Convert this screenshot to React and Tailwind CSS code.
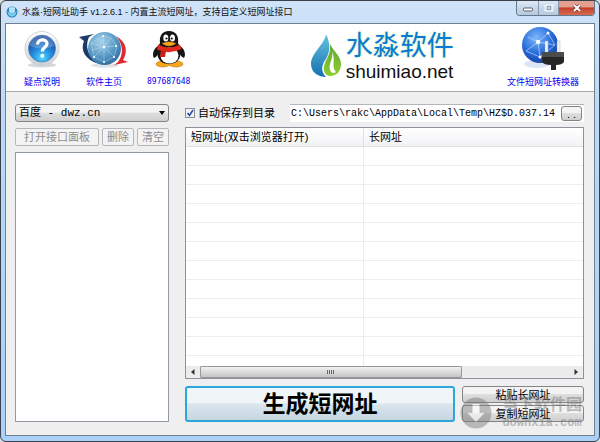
import React, { useState } from "react";

const rows = Array.from({ length: 12 });

const silver =
  "rounded-[3px] border border-[#858585] bg-linear-to-b from-[#f3f3f3] from-45% via-[#dedede] via-50% to-[#cfcfcf]";

function AppIcon() {
  return (
    <svg viewBox="0 0 12 12" className="size-3">
      <circle cx="6" cy="6" r="5.5" fill="#2a7fb5" />
      <path d="M1.500 5q4.500 5 9 0c0 7.500-9 7.500-9 0z" fill="#79cdf0" />
      <path d="M3 1.800q3-1.800 6 0v4q-3 3-6 0z" fill="#b6e2f5" />
    </svg>
  );
}

function HelpIcon() {
  return (
    <svg viewBox="0 0 38 38" className="size-[38px]">
      <defs>
        <radialGradient id="help" cx="50%" cy="85%" r="75%">
          <stop offset="0" stopColor="#52d8ff" />
          <stop offset="0.5" stopColor="#2588da" />
          <stop offset="1" stopColor="#164a9c" />
        </radialGradient>
        <linearGradient id="ring" x1="0" y1="0" x2="0" y2="1">
          <stop offset="0" stopColor="#ffffff" />
          <stop offset="1" stopColor="#c9ced4" />
        </linearGradient>
      </defs>
      <ellipse cx="19" cy="35" rx="14" ry="2.500" fill="#d5d8dc" />
      <circle cx="19" cy="18.500" r="17" fill="url(#ring)" stroke="#d0d3d6" />
      <circle cx="19" cy="18.500" r="13.500" fill="url(#help)" stroke="#3d6fb0" strokeWidth=".6" />
      <path d="M7 16a12 12 0 0 1 24 0q-12 5-24 0z" fill="#fff" opacity=".22" />
      <path
        d="M14.500 14.500c0-6 9.500-6 9.500-.8 0 3.600-4.700 3.600-4.700 7.800"
        fill="none"
        stroke="#fff"
        strokeWidth="3.200"
      />
      <circle cx="19.300" cy="25.800" r="2" fill="#fff" />
    </svg>
  );
}

function GlobeIcon() {
  return (
    <svg viewBox="0 0 50 38" className="h-[38px] w-[50px]">
      <defs>
        <radialGradient id="globe" cx="40%" cy="30%" r="75%">
          <stop offset="0" stopColor="#a9d2ea" />
          <stop offset="0.6" stopColor="#5699c6" />
          <stop offset="1" stopColor="#2d6a9c" />
        </radialGradient>
      </defs>
      <ellipse cx="26" cy="35.500" rx="14" ry="2" fill="#dfe2e6" />
      <path d="M0 7l15-3-5 3C6 15 8 27 20 34 6 30 1 20 5 11z" fill="#1d3b68" />
      <path d="M49 32l-14 3 4-3c6-8 5-18-2-26 11 6 12 16 7 24z" fill="#dc2b31" />
      <circle cx="25.500" cy="18.500" r="16.500" fill="url(#globe)" />
      <path
        d="M12 13l12-7 8 2 6 8-3 11-10 5-10-5-3-14 13 4 13-1M24 6l1 11-10 10M25 17l10 10M25 17l7-9M13 20l12-3v15"
        fill="none"
        stroke="#d8edf8"
        strokeWidth=".6"
        opacity=".6"
      />
      <g fill="#fff">
        <circle cx="24" cy="6" r="1" />
        <circle cx="25" cy="17" r="1.200" />
        <circle cx="15" cy="27" r="1" />
        <circle cx="35" cy="27" r="1" />
        <circle cx="25" cy="32" r="1" />
        <circle cx="37" cy="16" r="1" />
      </g>
    </svg>
  );
}

function PenguinIcon() {
  return (
    <svg viewBox="0 0 34 38" className="h-[38px] w-[34px]">
      <ellipse cx="11" cy="34" rx="7" ry="3" fill="#f6a71c" stroke="#c06c10" strokeWidth=".6" />
      <ellipse cx="24" cy="34" rx="7" ry="3" fill="#f6a71c" stroke="#c06c10" strokeWidth=".6" />
      <path d="M6 16C1 19 0 25 2 28c2-1 3-2 4-4zM28 16c5 3 6 9 4 12-2-1-3-2-4-4z" fill="#151515" />
      <path d="M17 1C10 1 7 6 8 13c-6 10-2 21 9 21s15-11 9-21C27 6 24 1 17 1z" fill="#151515" />
      <ellipse cx="17.500" cy="25.500" rx="9" ry="8" fill="#fff" />
      <ellipse cx="13.800" cy="8" rx="2.500" ry="3.500" fill="#fff" />
      <ellipse cx="20.500" cy="8" rx="2.500" ry="3.500" fill="#fff" />
      <circle cx="14.500" cy="8.500" r="1.100" fill="#111" />
      <circle cx="19.800" cy="8.500" r="1.100" fill="#111" />
      <path d="M10 13.500q7-3.500 14 0-7 5-14 0z" fill="#f7a917" stroke="#b96a0c" strokeWidth=".4" />
      <path d="M6 14.500q11 6 22 0l1.500 4.500Q17 25 5 19.500z" fill="#df2a20" />
      <path d="M9 20l5 1-1 6H8z" fill="#cf2018" />
    </svg>
  );
}

function PlugIcon() {
  return (
    <svg viewBox="0 0 44 46" className="h-[46px] w-11">
      <defs>
        <radialGradient id="net" cx="40%" cy="30%" r="75%">
          <stop offset="0" stopColor="#7cb8fa" />
          <stop offset="0.55" stopColor="#2b70dc" />
          <stop offset="1" stopColor="#123da0" />
        </radialGradient>
      </defs>
      <ellipse cx="16" cy="38" rx="13" ry="4" fill="#dce5f6" />
      <circle cx="19" cy="19" r="18" fill="url(#net)" />
      <path
        d="M7 11l10 5 10-9M17 16l2 15 15-12-17-3M17 16L5 25M19 31L5 25M27 7l7 12"
        fill="none"
        stroke="#cfe4ff"
        strokeWidth="1"
        opacity=".6"
      />
      <circle cx="17" cy="16" r="2.200" fill="#fff" />
      <circle cx="27" cy="7" r="1.500" fill="#fff" />
      <circle cx="19" cy="31" r="1.500" fill="#fff" />
      <path d="M24 15h3v12h-3zM36 15h3v12h-3z" fill="#eef2f7" stroke="#9aa6b8" strokeWidth=".4" />
      <path d="M21 26h22v10q-2 3-8 3v5h-5v-5q-7 0-9-3z" fill="#262626" />
      <path d="M21 26h22v5H21z" fill="#4c4c4c" />
    </svg>
  );
}

function DropLogo() {
  return (
    <svg viewBox="0 0 32 46" className="h-[46px] w-8">
      <defs>
        <linearGradient id="drop" x1="0" y1="0" x2="0" y2="1">
          <stop offset="0" stopColor="#67c3dc" />
          <stop offset="1" stopColor="#146fb5" />
        </linearGradient>
        <linearGradient id="leaf" x1="0" y1="0" x2="0" y2="1">
          <stop offset="0" stopColor="#5fa633" />
          <stop offset="1" stopColor="#8fce2f" />
        </linearGradient>
      </defs>
      <path d="M16 1C15 11 1 20 1 31c0 8 7 13 15 13C10 38 12 31 16 26c4-7 5-15 0-25z" fill="url(#drop)" />
      <path
        d="M20 11c1 9-3 14-5 19-3 7 0 13 5 13 7 0 11-5 11-12 0-8-7-12-11-20z"
        fill="url(#leaf)"
      />
      <path d="M22 18c2 8-4 12-2 19 1 3 4 4 6 2-5-5 0-11-4-21z" fill="#fff" />
    </svg>
  );
}

function HeaderLink({ label, children }) {
  return (
    <a href="#" className="flex flex-col items-center justify-between text-[9px] leading-3 text-[#0000f0]">
      {children}
      <span>{label}</span>
    </a>
  );
}

function TitleBar() {
  return (
    <header className="flex h-[22px] shrink-0 items-start justify-between pl-px">
      <div className="flex items-center gap-1 pt-[3px]">
        <AppIcon />
        <h1 className="text-[9px] leading-4 text-[#111]">
          水淼·短网址助手 v1.2.6.1 - 内置主流短网址，支持自定义短网址接口
        </h1>
      </div>
      <div className="flex h-[15px] overflow-hidden rounded-b-[4px] border border-t-0 border-[#68788a]">
        <button
          aria-label="最小化"
          className="flex w-[22px] items-center justify-center border-r border-[#8796a8] bg-linear-to-b from-[#dbe8f6] to-[#b5c8dd]"
        >
          <svg viewBox="0 0 10 8" className="h-2 w-2.5">
            <rect x=".5" y="4" width="9" height="3" rx="1" fill="#fff" stroke="#566375" />
          </svg>
        </button>
        <button
          aria-label="最大化"
          disabled
          className="flex w-5 items-center justify-center border-r border-[#8796a8] bg-linear-to-b from-[#dbe8f6] to-[#b5c8dd]"
        >
          <svg viewBox="0 0 10 8" className="h-2 w-2.5">
            <rect x="1" y="1" width="8" height="6" fill="#d3dfec" stroke="#f4f8fc" />
            <rect x="3.500" y="2.500" width="3" height="3" fill="none" stroke="#93a3b5" />
          </svg>
        </button>
        <button
          aria-label="关闭"
          className="flex w-[35px] items-center justify-center bg-linear-to-b from-[#e3a091] from-40% via-[#c5402c] via-50% to-[#d36b50]"
        >
          <svg viewBox="0 0 10 8" className="h-2 w-2.5">
            <path d="M2 1l6 6M8 1L2 7" stroke="#6b3535" strokeWidth="3.200" />
            <path d="M2 1l6 6M8 1L2 7" stroke="#fff" strokeWidth="2" />
          </svg>
        </button>
      </div>
    </header>
  );
}

function Banner() {
  return (
    <div className="flex h-[68px] shrink-0 items-stretch justify-between border-b border-[#a9a9a9] bg-white pr-[15px] pb-[3px] pl-[17px]">
      <nav className="flex gap-[18px] pt-1.5">
        <HeaderLink label="疑点说明">
          <HelpIcon />
        </HeaderLink>
        <HeaderLink label="软件主页">
          <GlobeIcon />
        </HeaderLink>
        <a
          href="#"
          className="flex flex-col items-center justify-between font-['DejaVu_Sans_Mono',monospace] text-[8px] leading-3 text-[#0000f0]"
        >
          <PenguinIcon />
          <span>897687648</span>
        </a>
      </nav>
      <div className="flex items-center gap-1 pl-[66px]">
        <DropLogo />
        <div>
          <div className="text-[27px] leading-8 text-[#0a7ad6] [text-shadow:0_0_2px_#b4e68c]">水淼软件</div>
          <div className="text-[19px] leading-5 text-[#111]">shuimiao.net</div>
        </div>
      </div>
      <div className="flex pt-0.5">
        <HeaderLink label="文件短网址转换器">
          <PlugIcon />
        </HeaderLink>
      </div>
    </div>
  );
}

function ApiPanel() {
  const smallButton =
    "rounded-[2px] border border-[#b5b8bb] bg-[#f3f3f3] px-1 text-[11px] leading-4 text-[#8c8c8c]";
  return (
    <aside className="flex w-[154px] shrink-0 flex-col">
      <div className="relative flex">
        <select
          aria-label="接口"
          className={`h-[18px] w-full appearance-none pl-[3px] font-['Liberation_Mono','Noto_Sans_CJK_SC',monospace] text-[11px] leading-4 text-black ${silver}`}
        >
          <option>百度 - dwz.cn</option>
        </select>
        <svg viewBox="0 0 6 4" className="pointer-events-none absolute top-[7px] right-1 h-1 w-1.5">
          <path d="M0 0h6L3 4z" fill="#000" />
        </svg>
      </div>
      <div className="mt-1.5 flex h-[18px] gap-[3px]">
        <button disabled className={`flex-1 ${smallButton}`}>
          打开接口面板
        </button>
        <button disabled className={`w-8 ${smallButton}`}>
          删除
        </button>
        <button disabled className={`w-8 ${smallButton}`}>
          清空
        </button>
      </div>
      <div className="mt-1.5 flex-1 border border-[#9098a2] bg-white" />
    </aside>
  );
}

function UrlTable() {
  return (
    <div className="mt-[5px] flex min-h-0 flex-1 flex-col border border-[#8c919b] bg-white">
      <div className="min-h-0 flex-1 overflow-hidden">
        <table className="w-full table-fixed border-separate border-spacing-0 text-[11px] leading-4">
          <thead>
            <tr className="bg-linear-to-b from-white to-[#f1f2f4]">
              <th className="h-[19px] w-[178px] border-r border-b border-[#dfe1e4] py-0 pl-[5px] text-left font-normal">
                短网址(双击浏览器打开)
              </th>
              <th className="h-[19px] border-b border-[#dfe1e4] py-0 pl-[5px] text-left font-normal">长网址</th>
            </tr>
          </thead>
          <tbody>
            {rows.map((_, i) => (
              <tr key={i}>
                <td className="h-[19px] border-r border-b border-[#ededed] p-0" />
                <td className="h-[19px] border-b border-[#ededed] p-0" />
              </tr>
            ))}
          </tbody>
        </table>
      </div>
      <div className="flex h-3 shrink-0 bg-[#ececec]">
        <button aria-label="向左滚动" className="flex w-[14px] items-center justify-center">
          <svg viewBox="0 0 4 6" className="h-1.5 w-1">
            <path d="M3.500 0v6L0 3z" fill="#333" />
          </svg>
        </button>
        <div className="flex-1">
          <div className="flex h-full w-[71%] items-center justify-center gap-px rounded-[1px] border border-[#989898] bg-linear-to-b from-[#f1f1f1] to-[#c4c4c6]">
            <span className="h-1 w-px bg-[#666]" />
            <span className="h-1 w-px bg-[#666]" />
            <span className="h-1 w-px bg-[#666]" />
            <span className="h-1 w-px bg-[#666]" />
          </div>
        </div>
        <button aria-label="向右滚动" className="flex w-[14px] items-center justify-center">
          <svg viewBox="0 0 4 6" className="h-1.5 w-1">
            <path d="M.5 0v6L4 3z" fill="#333" />
          </svg>
        </button>
      </div>
    </div>
  );
}

function Watermark() {
  return (
    <div className="pointer-events-none absolute right-0 bottom-[-7px] flex items-center gap-2 text-[#777] opacity-45">
      <svg viewBox="0 0 32 32" className="size-8">
        <circle cx="16" cy="16" r="15.500" fill="#777" />
        <path d="M12.500 7h7v9h5L16 25l-8.500-9h5z" fill="#fff" />
      </svg>
      <div className="w-[84px] text-center font-bold">
        <div className="text-[16px] leading-4">当下软件园</div>
        <div className="pt-1 font-['Liberation_Mono',monospace] text-[12px] leading-3">downxia.com</div>
      </div>
    </div>
  );
}

export default function App() {
  const [autoSave, setAutoSave] = useState(true);
  const [path, setPath] = useState("C:\\Users\\rakc\\AppData\\Local\\Temp\\HZ$D.037.14");

  return (
    <div className="min-h-screen bg-[#d8dde2] font-['Liberation_Sans','Noto_Sans_CJK_SC',sans-serif]">
      <div className="flex h-screen flex-col rounded-[6px] border border-[#39424c] bg-linear-to-b from-[#cfe3f8] from-0% via-[#b8d8fa] via-30% to-[#a9d0f6] px-1 pb-[5px]">
        <TitleBar />
        <main className="flex min-h-0 flex-1 flex-col border border-[#727f8d] bg-[#efefef]">
          <Banner />
          <div className="flex min-h-0 flex-1 gap-4 pt-3 pr-2.5 pb-[13px] pl-[9px]">
            <ApiPanel />
            <section className="flex min-w-0 flex-1 flex-col">
              <div className="flex h-[18px] items-center">
                <input
                  id="autosave"
                  type="checkbox"
                  checked={autoSave}
                  onChange={(e) => setAutoSave(e.target.checked)}
                  className="peer size-2.5 appearance-none border border-[#8a8f94] bg-[#eef3fa]"
                />
                <svg viewBox="0 0 10 10" className="pointer-events-none invisible -ml-2.5 size-2.5 peer-checked:visible">
                  <path d="M2.500 5l2 2.500L8 2" fill="none" stroke="#2e4a9e" strokeWidth="1.600" />
                </svg>
                <label htmlFor="autosave" className="ml-[3px] w-[92px] text-[11px] leading-4">
                  自动保存到目录
                </label>
                <div className="flex h-[18px] min-w-0 flex-1 items-center border-t border-[#b3b6ba] bg-white pr-0.5">
                  <input
                    aria-label="保存目录"
                    value={path}
                    onChange={(e) => setPath(e.target.value)}
                    className="min-w-0 flex-1 bg-transparent pl-px font-['Liberation_Mono',monospace] text-[10px] leading-4 outline-none"
                  />
                  <button className={`h-[15px] w-[21px] text-[11px] leading-3 ${silver}`}>. .</button>
                </div>
              </div>
              <UrlTable />
              <div className="relative mt-[7px] flex h-9 shrink-0 gap-[7px]">
                <button className="flex-1 rounded-[3px] border-2 border-[#2ba7dc] bg-linear-to-b from-[#f0f5f8] from-45% via-[#dbe6ed] via-50% to-[#c5d5e0] text-[23px] leading-7 font-bold">
                  生成短网址
                </button>
                <div className="flex w-[122px] flex-col gap-0.5">
                  <button className={`flex-1 text-[11px] leading-3 ${silver}`}>粘贴长网址</button>
                  <button className={`flex-1 text-[11px] leading-3 ${silver}`}>复制短网址</button>
                </div>
                <Watermark />
              </div>
            </section>
          </div>
        </main>
      </div>
    </div>
  );
}
